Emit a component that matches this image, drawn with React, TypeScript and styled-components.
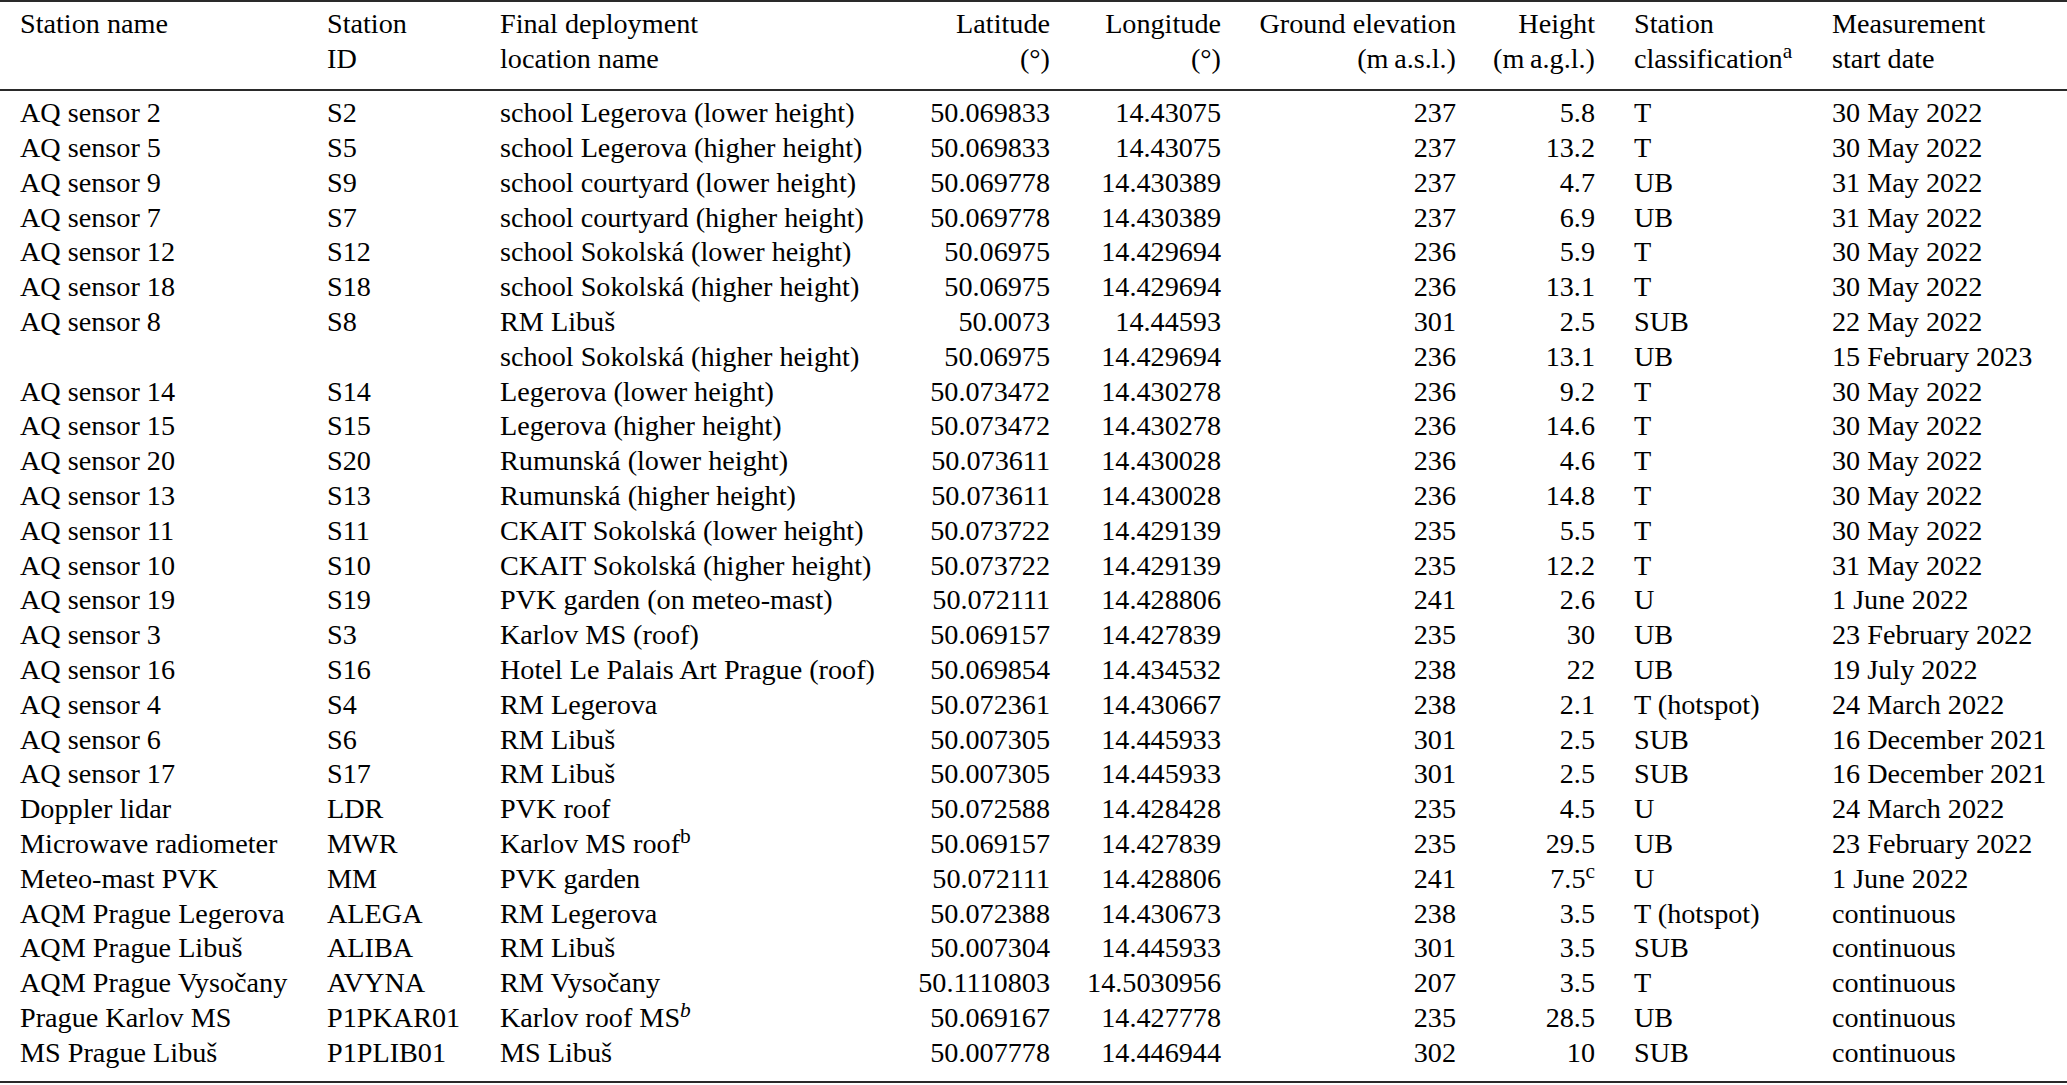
import React from "react";
import styled, { createGlobalStyle } from "styled-components";

const GlobalStyle = createGlobalStyle`
  html, body {
    margin: 0;
    padding: 0;
    background: #ffffff;
  }
  body {
    font-family: "Liberation Serif", "Times New Roman", serif;
    color: #000;
  }
`;

const Table = styled.table`
  width: 2067px;
  table-layout: fixed;
  border-collapse: separate;
  border-spacing: 0;
  border-top: 2px solid #2a2a2a;
  border-bottom: 2px solid #2a2a2a;
  font-family: "Liberation Serif", "Times New Roman", serif;
  font-size: 28.2px;
  line-height: 34.8px;
  color: #000;
`;

const Col = styled.col<{ $w: number }>`
  width: ${(p) => p.$w}px;
`;

type Align = "left" | "right";

const HeadCell = styled.th<{ $align: Align; $indent?: number }>`
  font-weight: normal;
  text-align: ${(p) => p.$align};
  vertical-align: top;
  white-space: nowrap;
  padding: 5.3px 0 12px ${(p) => p.$indent ?? 0}px;
  border-bottom: 2px solid #2a2a2a;
`;

const Row = styled.tr``;

const Cell = styled.td<{ $align: Align; $indent?: number }>`
  text-align: ${(p) => p.$align};
  white-space: nowrap;
  padding: 0 0 0 ${(p) => p.$indent ?? 0}px;
  vertical-align: top;

  ${Row}:first-child > & {
    padding-top: 5.4px;
  }
  ${Row}:last-child > & {
    padding-bottom: 10.3px;
  }
`;

const Sup = styled.sup<{ $italic?: boolean }>`
  font-size: 0.76em;
  line-height: 0;
  vertical-align: 0.48em;
  font-style: ${(p) => (p.$italic ? "italic" : "normal")};
`;

type ColDef = { w: number; align: Align; indent?: number };

const columns: ColDef[] = [
  { w: 327, align: "left", indent: 20 },
  { w: 173, align: "left" },
  { w: 415, align: "left" },
  { w: 135, align: "right" },
  { w: 171, align: "right" },
  { w: 235, align: "right" },
  { w: 139, align: "right" },
  { w: 237, align: "left", indent: 39 },
  { w: 235, align: "left" },
];

const headers: React.ReactNode[] = [
  <>Station name</>,
  <>
    Station
    <br />
    ID
  </>,
  <>
    Final deployment
    <br />
    location name
  </>,
  <>
    Latitude
    <br />
    (°)
  </>,
  <>
    Longitude
    <br />
    (°)
  </>,
  <>
    Ground elevation
    <br />
    (m{"\u2009"}a.s.l.)
  </>,
  <>
    Height
    <br />
    (m{"\u2009"}a.g.l.)
  </>,
  <>
    Station
    <br />
    classification<Sup>a</Sup>
  </>,
  <>
    Measurement
    <br />
    start date
  </>,
];

type RowData = React.ReactNode[];

const rows: RowData[] = [
  ["AQ sensor 2", "S2", "school Legerova (lower height)", "50.069833", "14.43075", "237", "5.8", "T", "30 May 2022"],
  ["AQ sensor 5", "S5", "school Legerova (higher height)", "50.069833", "14.43075", "237", "13.2", "T", "30 May 2022"],
  ["AQ sensor 9", "S9", "school courtyard (lower height)", "50.069778", "14.430389", "237", "4.7", "UB", "31 May 2022"],
  ["AQ sensor 7", "S7", "school courtyard (higher height)", "50.069778", "14.430389", "237", "6.9", "UB", "31 May 2022"],
  ["AQ sensor 12", "S12", "school Sokolská (lower height)", "50.06975", "14.429694", "236", "5.9", "T", "30 May 2022"],
  ["AQ sensor 18", "S18", "school Sokolská (higher height)", "50.06975", "14.429694", "236", "13.1", "T", "30 May 2022"],
  ["AQ sensor 8", "S8", "RM Libuš", "50.0073", "14.44593", "301", "2.5", "SUB", "22 May 2022"],
  ["", "", "school Sokolská (higher height)", "50.06975", "14.429694", "236", "13.1", "UB", "15 February 2023"],
  ["AQ sensor 14", "S14", "Legerova (lower height)", "50.073472", "14.430278", "236", "9.2", "T", "30 May 2022"],
  ["AQ sensor 15", "S15", "Legerova (higher height)", "50.073472", "14.430278", "236", "14.6", "T", "30 May 2022"],
  ["AQ sensor 20", "S20", "Rumunská (lower height)", "50.073611", "14.430028", "236", "4.6", "T", "30 May 2022"],
  ["AQ sensor 13", "S13", "Rumunská (higher height)", "50.073611", "14.430028", "236", "14.8", "T", "30 May 2022"],
  ["AQ sensor 11", "S11", "CKAIT Sokolská (lower height)", "50.073722", "14.429139", "235", "5.5", "T", "30 May 2022"],
  ["AQ sensor 10", "S10", "CKAIT Sokolská (higher height)", "50.073722", "14.429139", "235", "12.2", "T", "31 May 2022"],
  ["AQ sensor 19", "S19", "PVK garden (on meteo-mast)", "50.072111", "14.428806", "241", "2.6", "U", "1 June 2022"],
  ["AQ sensor 3", "S3", "Karlov MS (roof)", "50.069157", "14.427839", "235", "30", "UB", "23 February 2022"],
  ["AQ sensor 16", "S16", "Hotel Le Palais Art Prague (roof)", "50.069854", "14.434532", "238", "22", "UB", "19 July 2022"],
  ["AQ sensor 4", "S4", "RM Legerova", "50.072361", "14.430667", "238", "2.1", "T (hotspot)", "24 March 2022"],
  ["AQ sensor 6", "S6", "RM Libuš", "50.007305", "14.445933", "301", "2.5", "SUB", "16 December 2021"],
  ["AQ sensor 17", "S17", "RM Libuš", "50.007305", "14.445933", "301", "2.5", "SUB", "16 December 2021"],
  ["Doppler lidar", "LDR", "PVK roof", "50.072588", "14.428428", "235", "4.5", "U", "24 March 2022"],
  [
    "Microwave radiometer",
    "MWR",
    <>
      Karlov MS roof<Sup>b</Sup>
    </>,
    "50.069157",
    "14.427839",
    "235",
    "29.5",
    "UB",
    "23 February 2022",
  ],
  [
    "Meteo-mast PVK",
    "MM",
    "PVK garden",
    "50.072111",
    "14.428806",
    "241",
    <>
      7.5<Sup>c</Sup>
    </>,
    "U",
    "1 June 2022",
  ],
  ["AQM Prague Legerova", "ALEGA", "RM Legerova", "50.072388", "14.430673", "238", "3.5", "T (hotspot)", "continuous"],
  ["AQM Prague Libuš", "ALIBA", "RM Libuš", "50.007304", "14.445933", "301", "3.5", "SUB", "continuous"],
  ["AQM Prague Vysočany", "AVYNA", "RM Vysočany", "50.1110803", "14.5030956", "207", "3.5", "T", "continuous"],
  [
    "Prague Karlov MS",
    "P1PKAR01",
    <>
      Karlov roof MS<Sup $italic>b</Sup>
    </>,
    "50.069167",
    "14.427778",
    "235",
    "28.5",
    "UB",
    "continuous",
  ],
  ["MS Prague Libuš", "P1PLIB01", "MS Libuš", "50.007778", "14.446944", "302", "10", "SUB", "continuous"],
];

export default function App() {
  return (
    <>
      <GlobalStyle />
      <Table>
        <colgroup>
          {columns.map((c, i) => (
            <Col key={i} $w={c.w} />
          ))}
        </colgroup>
        <thead>
          <tr>
            {headers.map((h, i) => (
              <HeadCell key={i} $align={columns[i].align} $indent={columns[i].indent}>
                {h}
              </HeadCell>
            ))}
          </tr>
        </thead>
        <tbody>
          {rows.map((r, ri) => (
            <Row key={ri}>
              {r.map((v, ci) => (
                <Cell key={ci} $align={columns[ci].align} $indent={columns[ci].indent}>
                  {v}
                </Cell>
              ))}
            </Row>
          ))}
        </tbody>
      </Table>
    </>
  );
}
